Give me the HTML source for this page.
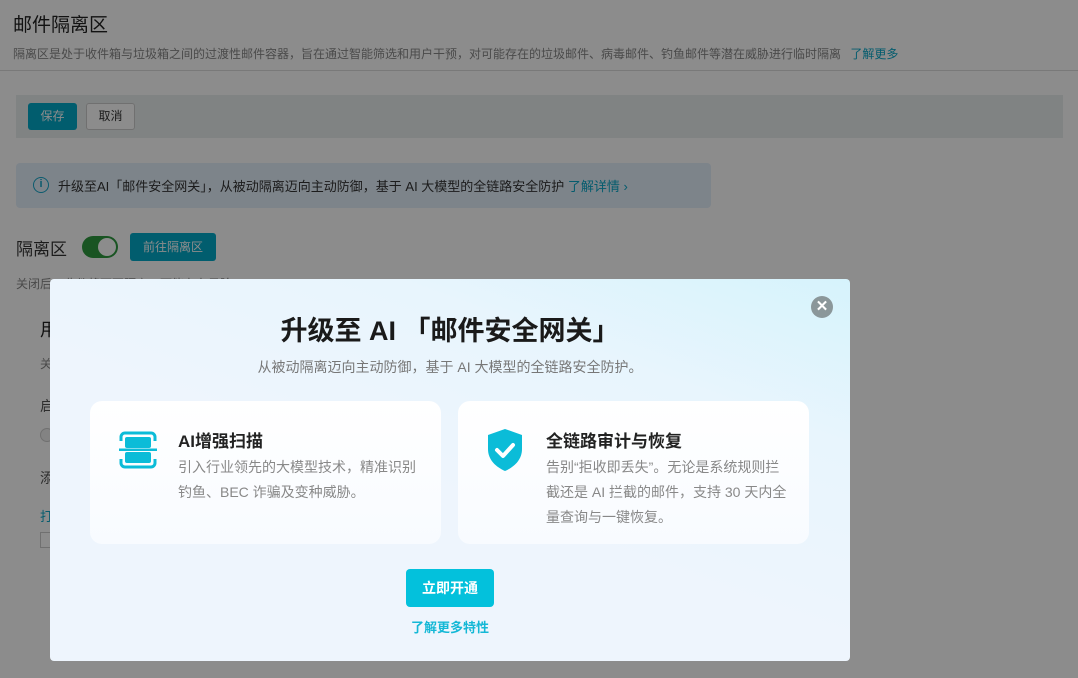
<!DOCTYPE html>
<html><head><meta charset="utf-8"><style>
*{margin:0;padding:0;box-sizing:border-box}
body{width:1078px;height:678px;overflow:hidden;position:relative;background:#fff;font-family:"Liberation Sans","Noto Sans CJK SC",sans-serif;color:#333}
.a{position:absolute;white-space:nowrap}
.ov{position:absolute;left:0;top:0;width:1078px;height:678px;background:rgba(0,0,0,0.45)}
.modal{position:absolute;left:50px;top:279px;width:800px;height:382px;border-radius:4px;background:linear-gradient(200deg,#d6f3fc 0%,#e8f5fd 25%,#eef5fd 55%,#eef5fd 100%)}
.card{position:absolute;top:122px;width:351px;height:143px;border-radius:12px;background:linear-gradient(180deg,#fff,#f8fbff)}
.card h3{position:absolute;left:88px;top:26px;font-size:17px;font-weight:bold;color:#222}
.card p{position:absolute;left:88px;top:54px;font-size:14px;line-height:25px;color:#888;white-space:normal;width:242px}
</style></head><body>
<div class="a" style="left:13px;top:10px;font-size:19px;color:#222">邮件隔离区</div>
<div class="a" style="left:13px;top:45px;font-size:12px;color:#888">隔离区是处于收件箱与垃圾箱之间的过渡性邮件容器，旨在通过智能筛选和用户干预，对可能存在的垃圾邮件、病毒邮件、钓鱼邮件等潜在威胁进行临时隔离 <span style="color:#0aa8c8;margin-left:6px">了解更多</span></div>
<div class="a" style="left:0;top:70px;width:1078px;height:1px;background:#ddd"></div>
<div class="a" style="left:16px;top:95px;width:1047px;height:43px;background:#eaeeee"></div>
<div class="a" style="left:28px;top:103px;width:49px;height:27px;background:#03a9c8;border-radius:3px;color:#fff;font-size:12px;text-align:center;line-height:27px">保存</div>
<div class="a" style="left:86px;top:103px;width:49px;height:27px;background:#fff;border:1px solid #ccc;border-radius:3px;color:#333;font-size:12px;text-align:center;line-height:25px">取消</div>
<div class="a" style="left:16px;top:163px;width:695px;height:45px;background:#e4f0fc;border-radius:4px"></div>
<div class="a" style="left:33px;top:177px;width:16px;height:16px;border:1.5px solid #16a6c8;border-radius:50%;color:#16a6c8;font-size:11px;text-align:center;line-height:13px;font-weight:bold">i</div>
<div class="a" style="left:58px;top:176px;font-size:13px;color:#333">升级至AI「邮件安全网关」，从被动隔离迈向主动防御，基于 AI 大模型的全链路安全防护 <span style="color:#0aa8c8">了解详情 ›</span></div>
<div class="a" style="left:16px;top:235px;font-size:17px;color:#333">隔离区</div>
<div class="a" style="left:82px;top:236px;width:36px;height:22px;border-radius:11px;background:#2e9a3e"><div style="position:absolute;right:2px;top:2px;width:18px;height:18px;border-radius:50%;background:#fff"></div></div>
<div class="a" style="left:130px;top:233px;width:86px;height:28px;background:#03a9c8;border-radius:3px;color:#fff;font-size:12px;text-align:center;line-height:28px">前往隔离区</div>
<div class="a" style="left:16px;top:275px;font-size:12px;color:#888">关闭后，收件将不再隔离，可能存在风险</div>
<div class="a" style="left:40px;top:316px;font-size:18px;color:#222">用</div>
<div class="a" style="left:40px;top:355px;font-size:12px;color:#888">关</div>
<div class="a" style="left:40px;top:396px;font-size:14px;color:#555">启</div>
<div class="a" style="left:40px;top:428px;width:14px;height:14px;border-radius:50%;border:1px solid #ccc;background:#eee"></div>
<div class="a" style="left:40px;top:468px;font-size:14px;color:#555">添</div>
<div class="a" style="left:40px;top:506px;font-size:13px;color:#0aa8c8">打</div>
<div class="a" style="left:40px;top:532px;width:14px;height:16px;border:1px solid #ccc"></div>
<div class="ov"></div>
<div class="modal">
<div class="a" style="left:0;width:800px;text-align:center;top:30px;font-size:27px;font-weight:bold;color:#1a1a1a">升级至 AI 「邮件安全网关」</div>
<div class="a" style="left:0;width:800px;text-align:center;top:78px;font-size:14px;color:#777">从被动隔离迈向主动防御，基于 AI 大模型的全链路安全防护。</div>
<div class="a" style="left:761px;top:17px;width:22px;height:22px;border-radius:50%;background:#8b979a;color:#fff;text-align:center;line-height:21px;font-size:15px;font-weight:bold">✕</div>
<div class="card" style="left:40px">
<svg style="position:absolute;left:29px;top:30px" width="38" height="38" viewBox="0 0 38 38"><g fill="none" stroke="#0bbcd8" stroke-width="3"><path d="M2 10V6a4 4 0 0 1 4-4h26a4 4 0 0 1 4 4v4M2 28v4a4 4 0 0 0 4 4h26a4 4 0 0 0 4-4v-4"/></g><rect x="6" y="6" width="26" height="11" rx="2" fill="#0bbcd8"/><rect x="6" y="21" width="26" height="11" rx="2" fill="#0bbcd8"/><rect x="0" y="17.5" width="38" height="2.5" fill="#0bbcd8"/></svg>
<h3>AI增强扫描</h3><p>引入行业领先的大模型技术，精准识别钓鱼、BEC 诈骗及变种威胁。</p></div>
<div class="card" style="left:408px">
<svg style="position:absolute;left:27px;top:27px" width="40" height="44" viewBox="0 0 40 44"><path d="M20 1L37 7v14c0 11-8 18-17 22C11 39 3 32 3 21V7z" fill="#0bbcd8"/><path d="M12 22l6 6 10-11" fill="none" stroke="#fff" stroke-width="4" stroke-linecap="round" stroke-linejoin="round"/></svg>
<h3>全链路审计与恢复</h3><p>告别“拒收即丢失”。无论是系统规则拦截还是 AI 拦截的邮件，支持 30 天内全量查询与一键恢复。</p></div>
<div class="a" style="left:356px;top:290px;width:88px;height:38px;background:#03c1dc;border-radius:4px;color:#fff;font-size:14px;font-weight:bold;text-align:center;line-height:38px">立即开通</div>
<div class="a" style="left:0;width:800px;text-align:center;top:338px;font-size:13px;font-weight:bold;color:#14b8d6">了解更多特性</div>
</div>
</body></html>
